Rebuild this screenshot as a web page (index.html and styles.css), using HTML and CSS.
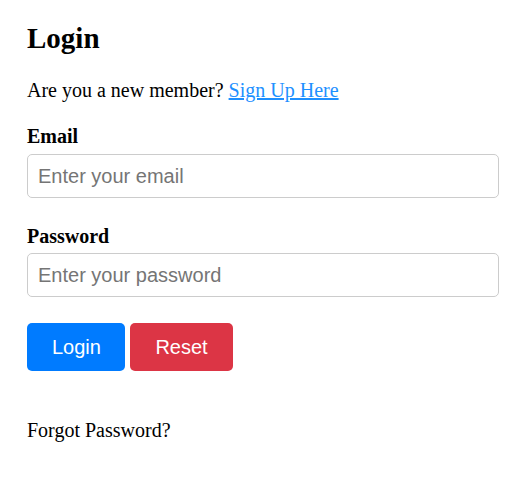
FILE: index.html
```html
<!DOCTYPE html>
<html lang="en">
<head>
<meta charset="utf-8">
<title>Login</title>
<link rel="stylesheet" href="styles.css">
</head>
<body>
<div class="container">
  <h1 class="title">Login</h1>
  <p class="intro">Are you a new member? <a href="#" class="link">Sign Up Here</a></p>
  <form class="form">
    <label class="label" for="email">Email</label>
    <input class="input" id="email" type="email" placeholder="Enter your email">
    <label class="label label-second" for="password">Password</label>
    <input class="input" id="password" type="password" placeholder="Enter your password">
    <div class="buttons">
      <button type="submit" class="btn btn-login">Login</button>
      <button type="reset" class="btn btn-reset">Reset</button>
    </div>
  </form>
  <p class="forgot">Forgot Password?</p>
</div>
</body>
</html>
```

FILE: styles.css
```css
html, body {
  margin: 0;
  padding: 0;
  background: #ffffff;
}

body {
  font-family: "Liberation Serif", "Times New Roman", serif;
  font-size: 20px;
  color: #000;
}

.container {
  width: 472px;
  padding: 21px 0 0 27px;
}

.title {
  margin: 0;
  font-size: 29px;
  line-height: 34px;
  font-weight: bold;
}

.intro {
  margin: 23px 0 0;
  line-height: 24px;
}

.link {
  color: #1e90ff;
  text-decoration: underline;
}

.form {
  display: flex;
  flex-direction: column;
  margin-top: 22px;
}

.label {
  display: block;
  font-weight: bold;
  line-height: 24px;
  margin-bottom: 6px;
}

.label-second {
  margin-top: 26px;
  margin-bottom: 5px;
}

.input {
  box-sizing: border-box;
  width: 472px;
  height: 44px;
  padding: 0 10px;
  border: 1px solid #cccccc;
  border-radius: 5px;
  font-family: "Liberation Sans", Arial, sans-serif;
  font-size: 20px;
  color: #000;
  background: #fff;
  outline: none;
}

.input::placeholder {
  color: #757575;
}

.buttons {
  display: flex;
  gap: 5px;
  margin-top: 26px;
}

.btn {
  height: 48px;
  padding: 0 25px;
  border: none;
  border-radius: 5px;
  font-family: "Liberation Sans", Arial, sans-serif;
  font-size: 20px;
  color: #ffffff;
  cursor: pointer;
}

.btn-login {
  width: 98px;
  background: #007bff;
}

.btn-reset {
  width: 103px;
  background: #dc3545;
}

.forgot {
  margin: 47px 0 0;
  line-height: 24px;
}
```
